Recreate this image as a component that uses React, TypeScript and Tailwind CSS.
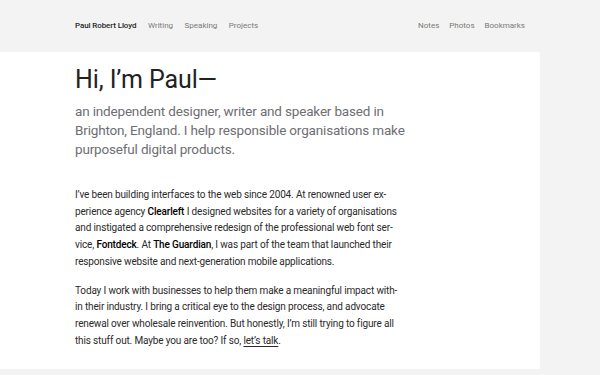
import React from "react";

export default function App() {
  const left = ["Writing", "Speaking", "Projects"];
  const right = ["Notes", "Photos", "Bookmarks"];

  return (
    <div
      className="h-[375px] overflow-hidden bg-[#f3f3f3] text-[#1d1d1f]"
      style={{ fontFamily: "Roboto, 'Liberation Sans', sans-serif" }}
      lang="en"
    >
      <header className="flex h-[52px] items-center justify-between px-[75px] pb-[1px] text-[8px]">
        <nav className="flex items-center gap-[11.5px]">
          <span className="tracking-[-0.1px] font-medium text-[#1f1f1f]">Paul Robert Lloyd</span>
          {left.map((item) => (
            <span key={item} className="text-[#7a7a7a]">
              {item}
            </span>
          ))}
        </nav>
        <nav className="flex items-center gap-[10px]">
          {right.map((item) => (
            <span key={item} className="text-[#7a7a7a]">
              {item}
            </span>
          ))}
        </nav>
      </header>

      <main className="h-[317px] w-[540px] rounded-tr-[2px] bg-white pl-[75px] pt-[11px]">
        <h1 className="text-[25px] leading-[34px] tracking-[-0.1px] text-[#222]">Hi, I’m Paul—</h1>
        <p className="mt-[5px] w-[340px] text-[13.5px] leading-[19px] tracking-[-0.17px] text-[#6e6e73]">
          an independent designer, writer and speaker based in
          <br />
          Brighton, England. I help responsible organisations make
          <br />
          purposeful digital products.
        </p>

        <div className="mt-[28px] w-[340px] text-[10px] leading-[16.7px] tracking-[-0.15px] text-[#2a2a2a]">
          <p>
            I’ve been building interfaces to the web since 2004. At renowned user ex-
            <br />
            perience agency <strong className="font-medium text-black">Clearleft</strong> I designed
            websites for a variety of organisations
            <br />
            and instigated a comprehensive redesign of the professional web font ser-
            <br />
            vice, <strong className="font-medium text-black">Fontdeck</strong>. At{" "}
            <strong className="font-medium text-black">The Guardian</strong>, I was part of the team
            that launched their
            <br />
            responsive website and next-generation mobile applications.
          </p>
          <p className="mt-[12px]">
            Today I work with businesses to help them make a meaningful impact with-
            <br />
            in their industry. I bring a critical eye to the design process, and advocate
            <br />
            renewal over wholesale reinvention. But honestly, I’m still trying to figure all
            <br />
            this stuff out. Maybe you are too? If so,{" "}
            <span className="underline underline-offset-2">let’s talk</span>.
          </p>
        </div>
      </main>
    </div>
  );
}
